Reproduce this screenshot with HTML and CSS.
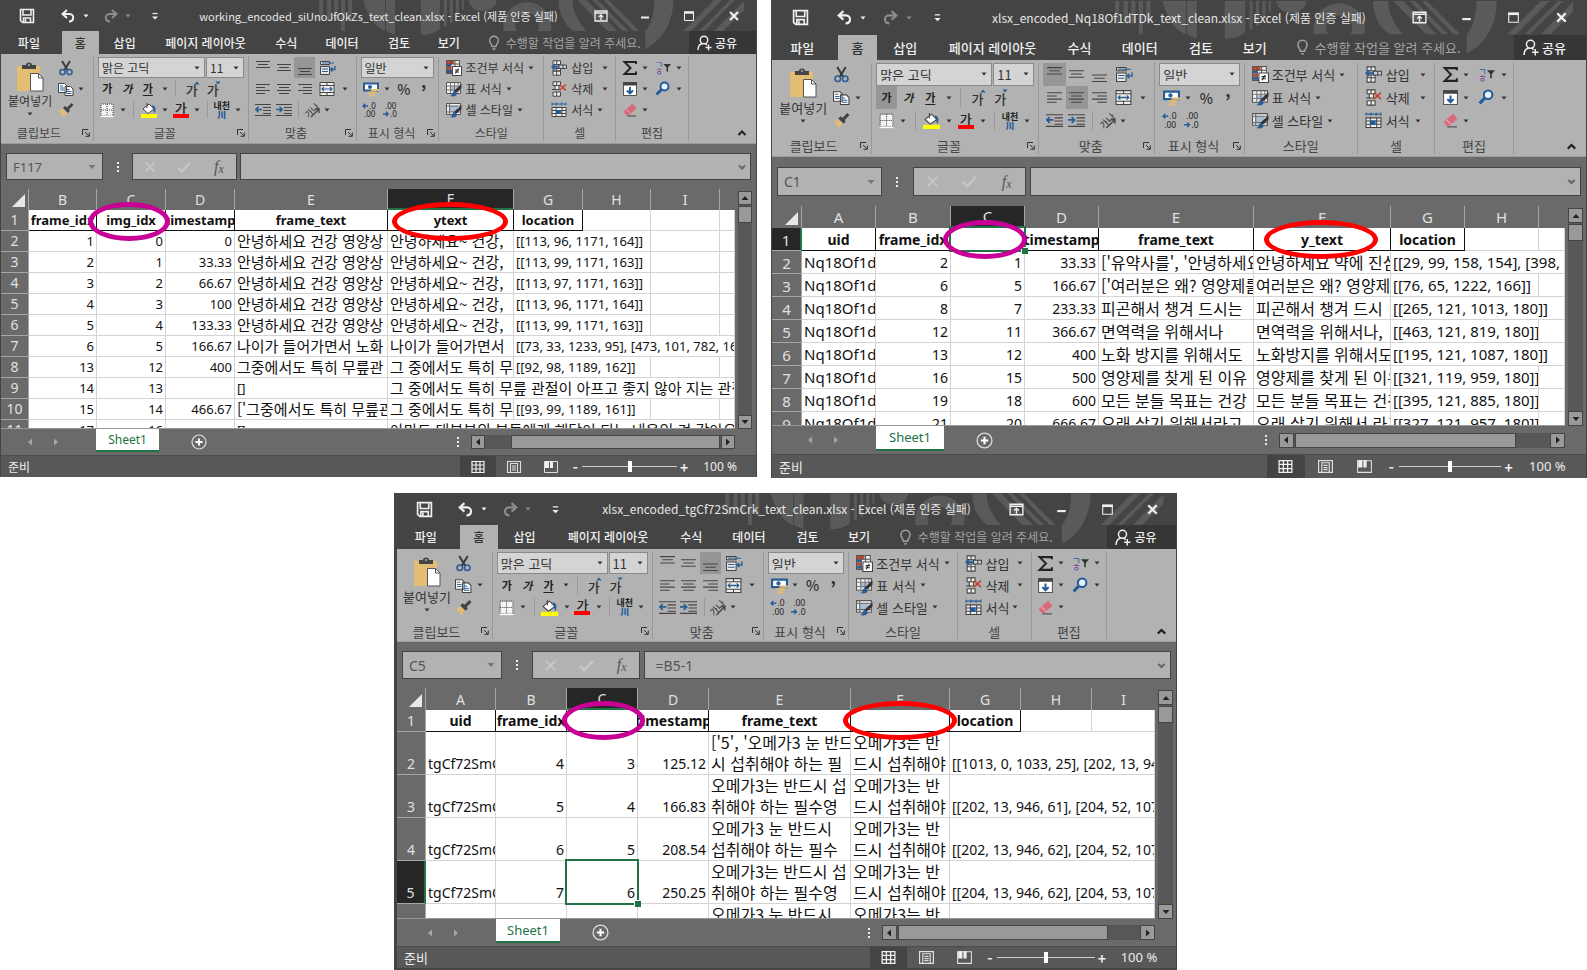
FILE: index.html
```html
<!DOCTYPE html>
<html lang="ko">
<head>
<meta charset="utf-8">
<meta name="viewport" content="width=device-width, initial-scale=1">
<title>Excel</title>
<link rel="stylesheet" href="styles.css">
</head>
<body>
<svg class="sprite" aria-hidden="true">
  <symbol id="save" viewBox="0 0 16 16"><path d="M1.5 1.5h13v13h-11l-2-2z" fill="none" stroke="#f0f0f0" stroke-width="1.6"/><path d="M4 2v5h8V2M4.500 14v-4h7v4M6.500 11v3" fill="none" stroke="#f0f0f0" stroke-width="1.500"/></symbol>
  <symbol id="undo" viewBox="0 0 16 16"><path d="M7 2 2.500 6 7 10M3 6h6.500c5 0 5 7.500-.5 7.500" fill="none" stroke="currentColor" stroke-width="2"/></symbol>
  <symbol id="redo" viewBox="0 0 16 16"><path d="M9 2l4.500 4L9 10M13 6H6.500c-5 0-5 7.500.5 7.500" fill="none" stroke="currentColor" stroke-width="2"/></symbol>
  <symbol id="custom" viewBox="0 0 16 16"><path d="M5.500 5.500h5" stroke="currentColor" stroke-width="1.200"/><path d="M5 8.500h6l-3 3z" fill="currentColor"/></symbol>
  <symbol id="opts" viewBox="0 0 16 16"><path d="M2 3h12v10H2zM2 5h12M8 12V7M5.800 9 8 6.800 10.200 9" fill="none" stroke="currentColor" stroke-width="1.300"/></symbol>
  <symbol id="min" viewBox="0 0 16 16"><path d="M4 9.500h8" stroke="currentColor" stroke-width="2"/></symbol>
  <symbol id="max" viewBox="0 0 16 16"><path d="M3.500 4h9v8.500h-9z" fill="none" stroke="currentColor"/><path d="M3 4.500h10" stroke="currentColor" stroke-width="2.400"/></symbol>
  <symbol id="close" viewBox="0 0 16 16"><path d="m4 4 8 8M12 4l-8 8" stroke="currentColor" stroke-width="2.200"/></symbol>
  <symbol id="bulb" viewBox="0 0 16 16"><path d="M6 11.500c0-2.500-2.300-3-2.300-6a4.300 4.300 0 0 1 8.600 0c0 3-2.300 3.500-2.300 6zM6.500 14h3" fill="none" stroke="currentColor" stroke-width="1.400"/></symbol>
  <symbol id="person" viewBox="0 0 16 16"><circle cx="8" cy="5" r="3.800" fill="none" stroke="currentColor" stroke-width="1.400"/><path d="M2 15c0-4 2-6 4.500-6.500M9 8.500l2 1.500M9.500 12.500h6M12.500 9.500v6" fill="none" stroke="currentColor" stroke-width="1.400"/></symbol>
  <symbol id="arrow" viewBox="0 0 8 8"><path d="M1.500 2.500h5l-2.500 3z" fill="currentColor"/></symbol>
  <symbol id="paste" viewBox="0 0 28 30"><path d="M1 4h23v25H1z" fill="#e3bd72"/><path d="M6 7V3h4a3 2.500 0 0 1 6 0h4v4z" fill="#444"/><circle cx="13" cy="3" r="1" fill="#b2b2b2"/><path d="M14.500 11.500h8l4.500 4.500v13H14.500z" fill="#fff" stroke="#555"/><path d="M22.500 11.500V16H27" fill="none" stroke="#555"/></symbol>
  <symbol id="cut" viewBox="0 0 16 16"><path d="M4 1l5.500 9M12 1 6.500 10" stroke="#3b3b3b" stroke-width="1.900"/><circle cx="4.500" cy="12" r="2.600" fill="none" stroke="#2a5d95" stroke-width="1.500"/><circle cx="11.500" cy="12" r="2.600" fill="none" stroke="#2a5d95" stroke-width="1.500"/></symbol>
  <symbol id="copy" viewBox="0 0 16 16"><path d="M.5 2.500h6l2 2v7h-8zM7 5.500h5.500l2.500 2.500v6.500H7z" fill="#fff" stroke="#444"/><path d="M2 5h3M2 7h4M2 9h4M8.500 8.500h3M8.500 10.500h5M8.500 12.500h5" stroke="#2a5d95"/></symbol>
  <symbol id="brush" viewBox="0 0 16 16"><path d="M1 9l4-2 4 4-3 4z" fill="#e3bd72"/><path d="M5 6l2-2 2 1.500L13.500 1 15.500 3 11 7.500 12 9l-2 2z" fill="#444"/></symbol>
  <symbol id="borders" viewBox="0 0 16 16"><path d="M2 2h12v12H2z" fill="#f4f4f4"/><path d="M2 2h12v12H2zM8 2v12M2 8h12" fill="none" stroke="#444" stroke-dasharray="1 1"/><path d="M1.500 14.500h13" stroke="#fff" stroke-width="1.400"/></symbol>
  <symbol id="fill" viewBox="0 0 16 16"><path d="M2 7l6-5 5 5-6 4.500z" fill="#fff" stroke="#444"/><path d="M6 1v5" stroke="#444"/><path d="M11 3c4 1 4 4 3 8-2-1-1-3-2-4z" fill="#2a5d95"/><path d="M0 12h16v4H0z" fill="#ffff00"/></symbol>
  <symbol id="vtop" viewBox="0 0 16 16"><path d="M1 1.500h14M3 4.500h10M1 7.500h14" stroke="#444"/></symbol>
  <symbol id="vmid" viewBox="0 0 16 16"><path d="M1 4.500h14M3 7.500h10M1 10.500h14" stroke="#444"/></symbol>
  <symbol id="vbot" viewBox="0 0 16 16"><path d="M1 8.500h14M3 11.500h10M1 14.500h14" stroke="#444"/></symbol>
  <symbol id="hleft" viewBox="0 0 16 16"><path d="M1 3.500h14M1 6.500h9M1 9.500h14M1 12.500h9" stroke="#444"/></symbol>
  <symbol id="hmid" viewBox="0 0 16 16"><path d="M1 3.500h14M3 6.500h10M1 9.500h14M3 12.500h10" stroke="#444"/></symbol>
  <symbol id="hright" viewBox="0 0 16 16"><path d="M1 3.500h14M6 6.500h9M1 9.500h14M6 12.500h9" stroke="#444"/></symbol>
  <symbol id="wrap" viewBox="0 0 16 16"><path d="M.5 1.500h9v3h-9zM.5 6.500h9v8h-9z" fill="#e8e8e8" stroke="#444"/><path d="M2 3h12M2 9h6M2 11.500h6" stroke="#2a5d95"/><path d="M15 6v3.500h-4M12.500 7.500l-2 2 2 2" fill="none" stroke="#2a5d95" stroke-width="1.300"/></symbol>
  <symbol id="merge" viewBox="0 0 16 16"><path d="M1 1.500h14v13H1zM1 4.500h14M1 11.500h14M8 1.500v3M8 11.500v3" fill="#eee" stroke="#444"/><path d="M3 8h10M5 6 3 8l2 2M11 6l2 2-2 2" fill="none" stroke="#2a5d95" stroke-width="1.200"/></symbol>
  <symbol id="outdent" viewBox="0 0 16 16"><path d="M0 2.500h16M8 5.500h8M8 8.500h8M8 11.500h8M0 13.500h16" stroke="#444"/><path d="M7 7.500H1M3.500 4.800.8 7.500l2.700 2.700" fill="none" stroke="#2a5d95" stroke-width="1.600"/></symbol>
  <symbol id="indent" viewBox="0 0 16 16"><path d="M0 2.500h16M8 5.500h8M8 8.500h8M8 11.500h8M0 13.500h16" stroke="#444"/><path d="M0 7.500h6M3.500 4.800l2.700 2.700-2.700 2.700" fill="none" stroke="#2a5d95" stroke-width="1.600"/></symbol>
  <symbol id="orient" viewBox="0 0 16 16"><text x="-1" y="12" font-size="9" transform="rotate(-45 7 9)" fill="#333">가나</text><path d="M6 15 14 7M14 11V7h-4" fill="none" stroke="#444" stroke-width="1.300"/></symbol>
  <symbol id="money" viewBox="0 0 16 16"><path d="M1 2.500h14v7H1z" fill="#fff" stroke="#2a5d95" stroke-width="2"/><circle cx="7" cy="6" r="2" fill="#2a5d95"/><path d="M8 8h8v2H8zM5 10.500h8v2H5zM6 13.500h6v2H6z" fill="#e3bd72"/></symbol>
  <symbol id="decup" viewBox="0 0 16 16"><path d="M6 4H1M3.200 1.800 1 4l2.200 2.200" fill="none" stroke="#2a5d95" stroke-width="1.300"/><text x="7" y="7" font-size="8" fill="#222">.0</text><text x="2" y="15" font-size="8" fill="#222">.00</text></symbol>
  <symbol id="decdown" viewBox="0 0 16 16"><text x="2" y="7" font-size="8" fill="#222">.00</text><path d="M0 12h5M3 9.800 5.200 12 3 14.200" fill="none" stroke="#2a5d95" stroke-width="1.300"/><text x="7" y="15" font-size="8" fill="#222">.0</text></symbol>
  <symbol id="cond" viewBox="0 0 16 16"><path d="M.5.5h13v13H.5z" fill="#eee" stroke="#555"/><path d="M1 1h7v3H1zM1 7h4v3H1z" fill="#c8452c"/><path d="M1 4h4v3H1zM1 10h5v3H1z" fill="#2a5d95"/><path d="M5 .5v13M9 .5v6M1 4h12" stroke="#555"/><path d="M6.500 6.500h9v9h-9z" fill="#fff" stroke="#444"/><path d="M9 10h4M9 12h4M12.500 8.500l-3 5" stroke="#222"/></symbol>
  <symbol id="tfmt" viewBox="0 0 16 16"><path d="M.5 1.500h14v11H.5z" fill="#f2f2f2" stroke="#555"/><path d="M4 5h7v5H4z" fill="#a9bdd4"/><path d="M.5 5h14M.5 9h14M4.500 1.500v11M8.500 1.500v11M12 1.500v11" stroke="#777"/><path d="M15.500 3v4L10 12 8 10z" fill="#333"/><path d="M8 10l3 2.500c0 3-4 3.500-7 2.500 3-1 2-4 4-5z" fill="#2a5d95"/></symbol>
  <symbol id="cstyle" viewBox="0 0 16 16"><path d="M.5 1.500h14v11H.5z" fill="#f2f2f2" stroke="#555"/><path d="M3 4h9v6H3z" fill="#a9bdd4"/><path d="M.5 4h14M.5 10h14M3.500 1.500v11" stroke="#666"/><path d="M15.500 3v4L10 12 8 10z" fill="#333"/><path d="M8 10l3 2.500c0 3-4 3.500-7 2.500 3-1 2-4 4-5z" fill="#2a5d95"/></symbol>
  <symbol id="ins" viewBox="0 0 16 16"><path d="M2 .8h7.500v3.700H2zM5.700.8v3.700M2 11h7.500v4.200H2zM5.700 8.500v6.700M2 8.500h7.500V11H2z" fill="#eee" stroke="#444"/><path d="M8 5h7.500v3.500H8zM12 5v3.500" fill="#c5d2e2" stroke="#444"/><path d="M8 6.700H1.500M4 4 1.200 6.700 4 9.500" fill="none" stroke="#2a5d95" stroke-width="1.700"/></symbol>
  <symbol id="del" viewBox="0 0 16 16"><path d="M2 .8h7.500v3.700H2zM5.700.8v3.700M2 11h7.500v4.200H2zM5.700 11v4.200M4 4.500h4v4H4z" fill="#eee" stroke="#444"/><path d="M1 8.500h4" stroke="#444"/><path d="m8.500 3.500 6.500 6M15 3.500l-6.500 6" stroke="#c8452c" stroke-width="1.600"/></symbol>
  <symbol id="fmt" viewBox="0 0 16 16"><path d="M1 2h14M1 .5v3M15 .5v3M5.500.5v3M10.500.5v3" stroke="#2a5d95"/><path d="M1 5.500h14v9H1zM1 8.500h14M1 11.500h14M5 5.500v9M11 5.500v9" fill="#eee" stroke="#444"/><path d="M5 8h5v4H5z" fill="#1f5a9c"/></symbol>
  <symbol id="sum" viewBox="0 0 16 16"><path d="M14 4V2H2.500l6 6-6 6H14v-2.500" fill="none" stroke="#222" stroke-width="1.900"/></symbol>
  <symbol id="filldown" viewBox="0 0 16 16"><path d="M1.500 2.500h13v12h-13z" fill="#fff" stroke="#555"/><path d="M1 1h14v3.500H1z" fill="#444"/><path d="M8 6v6.500M5 9.500l3 3 3-3" fill="none" stroke="#1f5a9c" stroke-width="1.900"/></symbol>
  <symbol id="sort" viewBox="0 0 16 16"><text x="0" y="8" font-size="9" fill="#1f5a9c">ㄱ</text><text x="0" y="15" font-size="9" fill="#7c3c9c">ㅎ</text><path d="M8.500 4H16l-3 3.500V12l-1.500-1V7.500z" fill="#333"/></symbol>
  <symbol id="find" viewBox="0 0 16 16"><circle cx="9.500" cy="5.500" r="4" fill="#e9eff6" stroke="#1f5a9c" stroke-width="1.900"/><path d="M6.500 8.500 1.500 13.500" stroke="#1f5a9c" stroke-width="2.800"/></symbol>
  <symbol id="erase" viewBox="0 0 16 16"><path d="M10.500 1.500 14.500 6.500 7 13H4L1.500 9.500z" fill="#d9697d"/><path d="m4 7.300 4.500 4" stroke="#e9a5b0"/><path d="M5 14h9" stroke="#444"/></symbol>
  <symbol id="launch" viewBox="0 0 8 8"><path d="M.5 6V.5H6M3 3l4 4M7.300 3.500v3.800H3.500" fill="none" stroke="#333"/></symbol>
  <symbol id="chevup" viewBox="0 0 16 16"><path d="m4.500 10 3.500-3.500 3.500 3.500" fill="none" stroke="#222" stroke-width="2"/></symbol>
  <symbol id="chevdown" viewBox="0 0 16 16"><path d="m5 6.500 3 3 3-3" fill="none" stroke="#666" stroke-width="2"/></symbol>
  <symbol id="cancel" viewBox="0 0 16 16"><path d="m3.500 3.500 9 9M12.500 3.500l-9 9" stroke="#c6c6c6" stroke-width="1.900"/></symbol>
  <symbol id="enter" viewBox="0 0 16 16"><path d="m2 8.500 4 4 8-9" fill="none" stroke="#c6c6c6" stroke-width="2.400"/></symbol>
  <symbol id="dots" viewBox="0 0 4 12"><path d="M1 1h2v2H1zM1 5h2v2H1zM1 9h2v2H1z" fill="#eee"/></symbol>
  <symbol id="tri-l" viewBox="0 0 8 8"><path d="M6 .5v7L2 4z" fill="currentColor"/></symbol>
  <symbol id="tri-r" viewBox="0 0 8 8"><path d="M2 .5v7L6 4z" fill="currentColor"/></symbol>
  <symbol id="tri-u" viewBox="0 0 8 8"><path d="M.5 6h7L4 2z" fill="currentColor"/></symbol>
  <symbol id="tri-d" viewBox="0 0 8 8"><path d="M.5 2h7L4 6z" fill="currentColor"/></symbol>
  <symbol id="plus" viewBox="0 0 16 16"><circle cx="8" cy="8" r="7" fill="none" stroke="#ddd" stroke-width="1.200"/><path d="M8 4.500v7M4.500 8h7" stroke="#fff" stroke-width="2"/></symbol>
  <symbol id="v-grid" viewBox="0 0 16 16"><path d="M2 2.500h12v11H2zM2 6h12M2 10h12M6 2.500v11M10 2.500v11" fill="none" stroke="#f0f0f0" stroke-width="1.200"/></symbol>
  <symbol id="v-page" viewBox="0 0 16 16"><path d="M1.500 2.500h13v11h-13zM4.500 4.500h7v9h-7zM6 7h4M6 9h4M6 11h4" fill="none" stroke="#e0e0e0" stroke-width="1.100"/></symbol>
  <symbol id="v-break" viewBox="0 0 16 16"><path d="M1.500 2.500h13v11h-13z" fill="none" stroke="#e0e0e0"/><path d="M2 2h4v7H2zM7 2h3v7H7z" fill="#eee"/></symbol>
  <symbol id="deco" viewBox="0 0 757 54">
    <g fill="#5a5a5a">
      <path d="M319 0h4v21h-4zM327 0h4v21h-4zM334 0h4v21h-4zM341 0h4v31h-4zM348 0h4v21h-4zM363 0h22v31c-10-3-18-17-22-31zM386 0h9v35l-9-4zM421 0h19v29c-6 5-12 6-19 6zM444 0h3v26h-3zM450 0h3v23h-3zM456 0h3v16h-3zM462 0h2v10h-2z"/>
      <path d="M469 0h28c-2 15-26 15-28 0z"/>
      <path fill-rule="evenodd" d="M504 31a24 24 0 1 1 47 0h-13a12 12 0 1 0-21 0z"/>
      <path d="M559 0h14c0 12 6 22 14 31h-13C565 25 559 13 559 0zM578 0h9l31 31h-10zM593 0h5l31 31h-6zM604 0h5l31 31h-6zM655 0h19c0 24-12 41-28 49V31c6-6 9-18 9-31zM684 31l31-31h8l-31 31zM700 31l31-31h5l-31 31zM715 31l30-30v9l-21 21z"/>
    </g>
  </symbol>
</svg>
<main class="desk">
  <div class="top" id="top"></div>
  <div class="bottom" id="bottom"></div>
</main>
<script src="app.js"></script>
</body>
</html>
```
FILE: styles.css
```css
* { box-sizing: border-box; }
body { margin: 0; background: #fff; font-family: "Noto Sans CJK KR", sans-serif; }
button, input, select { font: inherit; color: inherit; border: 0; padding: 0; margin: 0; background: none; border-radius: 0; }
.sprite { position: absolute; width: 0; height: 0; }
.sprite text, .ic text { font-family: "Noto Sans", "Noto Sans CJK KR", sans-serif; }

.desk { display: flex; flex-direction: column; gap: 15px; }
.top { display: grid; grid-template-columns: 757fr 816fr; column-gap: 14px; align-items: start; }
.bottom { display: grid; grid-template-columns: 394fr 783fr 410fr; }
.bottom .win { grid-column: 2; }

.win {
  --ui: 12px; --tab: 12px; --title: 11px; --icon: 16px;
  --caption: 31px; --tabs: 23px; --ribbon: 90px; --row: 21px;
  --box: 27px; --gap: 9px; --colh: 21px; --view: 240px; --cellh: 21px;
  --num: 13px; --txt: 13px; --ko: 15px; --head: 14px; --line: 20px;
  --sheetbar: 26px; --status: 22px; --bar: 14px; --nav: 95px; --sheet: 63px;
  min-width: 0; background: #6a6a6a; border: solid #444; border-width: 0 1px;
  font-size: var(--ui); line-height: 1;
}
.win.large {
  --ui: 13px; --tab: 13px; --title: 12px; --icon: 17px;
  --caption: 35px; --tabs: 25px; --ribbon: 97px; --row: 23px;
  --box: 29px; --gap: 10px; --colh: 22px; --view: 220px; --cellh: 23px;
  --num: 14px; --txt: 15px; --ko: 16px; --head: 15px; --line: 21px;
  --sheetbar: 28px; --status: 24px; --bar: 15px; --nav: 104px; --sheet: 68px;
}
.win.medium {
  --ui: 13px; --tab: 12px; --title: 12px; --icon: 17px;
  --caption: 32px; --tabs: 24px; --ribbon: 93px; --row: 22px;
  --box: 28px; --colh: 22px; --view: 231px; --cellh: 43px;
  --num: 14px; --txt: 14px; --ko: 16px; --head: 14px; --line: 21px;
  --sheetbar: 27px; --bar: 15px; --nav: 99px; --sheet: 64px;
  border-width: 0 1px 2px 3px;
}

.ic { display: block; flex: none; width: var(--icon); height: var(--icon); overflow: visible; }
.ar { width: 8px; height: 8px; }
.btn { display: flex; align-items: center; justify-content: center; min-width: 0; height: 100%; white-space: nowrap; }

/* caption and tabs */
.chrome { position: relative; background: #444; color: #f0f0f0; }
.deco { position: absolute; left: 0; top: 0; width: 100%; height: 100%; }
.caption { position: relative; display: grid; height: var(--caption); align-items: center;
  grid-template-columns: 53fr 28fr 8fr 8fr 26fr 8fr 46fr 403fr 44fr 44fr 44fr 45fr; }
.caption .dim { color: #8c8c8c; }
.caption h1 { margin: 0; min-width: 0; font-size: var(--title); font-weight: 400; line-height: 20px; text-align: center; white-space: nowrap; color: #e6e6e6; }
.tabs { position: relative; display: grid; height: var(--tabs); font-size: var(--tab); font-weight: 500;
  grid-template-columns: 61fr 37fr 52fr 110fr 52fr 60fr 54fr 46fr 218fr 67fr; }
.tabs .btn:first-child { padding-right: 5px; }
.tabs .on { background: #b2b2b2; color: #333; }
.tabs .tell { justify-content: flex-start; padding-left: 14px; gap: 4px; color: #a3a3a3; font-weight: 400; }
.tabs .share { background: #363636; gap: 3px; padding-right: 12px; }

/* ribbon */
.ribbon { display: grid; height: var(--ribbon); padding: 3px 0 2px; background: #b2b2b2; border-bottom: 1px solid #9c9c9c; color: #333;
  grid-template-columns: 93fr 155fr 108fr 83fr 105fr 72fr 73fr 67fr; }
.group { position: relative; min-width: 0; display: grid; grid-template-rows: repeat(3, var(--row)) 1fr; border-right: 1px solid #999; }
.group:last-child { border: 0; }
.row { display: grid; align-items: center; min-width: 0; }
.label { display: flex; align-items: center; justify-content: center; padding-top: 5px; white-space: nowrap; color: #444; }
.label.more { padding-right: 12px; }
.label .launch { position: absolute; right: 3px; bottom: 4px; width: 8px; height: 8px; }
.launch .ic { width: 8px; height: 8px; }
.clip { grid-template-columns: 54fr 23fr 8fr 8fr; }
.clip .paste { grid-row: 1 / 4; flex-direction: column; justify-content: flex-start; gap: 3px; padding-top: 5px; padding-left: 5px; }
.paste .ic { width: 28px; height: 30px; }
.paste .ar { width: 8px; height: 8px; }
.clip .label { grid-column: 1 / -1; padding-right: 16px; }
.f1 { grid-template-columns: 108fr 38fr; padding: 0 4px; column-gap: 1px; }
.f2 { grid-template-columns: 4fr 19fr 21fr 20fr 14fr 8fr 22fr 20fr 26fr; }
.f3 { grid-template-columns: 4fr 18fr 14fr 8fr 22fr 11fr 20fr 12fr 9fr 20fr 12fr 4fr; }
.a1 { grid-template-columns: 4fr 21fr 21fr 21fr 27fr 14fr; }
.a2 { grid-template-columns: 4fr 21fr 21fr 21fr 25fr 10fr 6fr; }
.a3 { grid-template-columns: 4fr 21fr 21fr 9fr 20fr 8fr 25fr; }
.n1 { padding: 0 4px; }
.n2 { grid-template-columns: 4fr 22fr 9fr 26fr 14fr 8fr; }
.n3 { grid-template-columns: 4fr 20fr 22fr 37fr; }
.s1 { padding-left: 7px; }
.s1 .btn { justify-content: flex-start; gap: 3px; }
.c1 { grid-template-columns: 49fr 22fr; padding-left: 5px; }
.c1 .btn:first-child { gap: 4px; justify-content: flex-start; padding-left: 2px; }
.c1.tight { grid-template-columns: 49fr 12fr 10fr; }
.e1 { grid-template-columns: 4fr 20fr 10fr 28fr 4fr; padding-right: 7px; }
.sep { width: 1px; height: 80%; justify-self: center; background: #999; }
.pressed { background: #969696; }
.combo { position: relative; display: block; height: var(--row); }
.combo select { appearance: none; width: 100%; height: 100%; padding-left: 3px; background: #d4d4d4; border: 1px solid #8a8a8a; color: #333; }
.combo .ar { position: absolute; right: 4px; top: 7px; pointer-events: none; }
.ga { font-size: 11px; font-weight: 700; color: #222; }
.ga.i { font-style: italic; }
.ga.u { text-decoration: underline; text-underline-offset: 2px; }
.ga.big { font-size: 13px; font-weight: 500; color: #333; padding-top: 2px; padding-left: 4px; }
.ga.big .ar { color: #2a5d95; align-self: flex-start; margin-left: -4px; width: 6px; height: 6px; }
.ga.col { position: relative; font-size: 13px; font-weight: 500; flex-direction: column; padding-bottom: 1px; }
.ga.col::after { content: ""; width: 16px; height: 4px; flex: none; background: #f00; }
.phon { flex-direction: column; font-size: 9px; line-height: 9px; font-weight: 700; color: #222; }
.phon b { color: #1f5a9c; font-size: 9px; }
.pct { font-size: 14px; font-weight: 500; }
.comma { font-size: 16px; font-weight: 900; padding-top: 4px; }
.fold { position: absolute; right: 6px; bottom: 0; height: 16px; }

/* formula bar */
.formula { display: grid; padding: var(--gap) 5px; grid-template-columns: 97fr 29fr 105fr 3fr 511fr; }
.formula > * { height: var(--box); min-width: 0; }
.field { display: flex; align-items: center; background: #b2b2b2; border: 1px solid #444; color: #555; padding-right: 4px; }
.field.wide { padding-right: 0; }
.field input { flex: 1; min-width: 0; padding-left: 6px; height: 100%; font-family: "Noto Sans", sans-serif; font-size: var(--num); }
.field.wide input { padding-left: 11px; }
.field .ar { margin-right: 2px; color: #777; }
.tools { display: grid; grid-template-columns: repeat(3, 1fr); background: #b2b2b2; border: 1px solid #444; }
.fxi { font-family: "Liberation Serif", serif; font-style: italic; font-size: 16px; color: #555; }
.fxi small { font-size: 12px; padding-top: 4px; }
.dots { width: 4px; height: 12px; }

/* sheet */
.sheet { position: relative; display: grid; grid-template-columns: minmax(0, 1fr) 21px; height: var(--view); }
.clipbox { overflow: hidden; border-bottom: 1px solid #999; }
.cells { width: 100%; table-layout: fixed; border-collapse: separate; border-spacing: 0; font-family: "Noto Sans", "Noto Sans CJK KR", sans-serif; font-size: var(--num); color: #111; }
.cells th, .cells td { padding: 0; position: relative; }
.cells thead th { height: var(--colh); background: #6a6a6a; border-right: 1px solid #a6a6a6; color: #e0e0e0; font-weight: 400; font-size: var(--head); line-height: 19px; }
.cells thead th.sel { background: #262626; border-bottom: 2px solid #217346; }
.cells thead th:last-child { border-right: 0; }
.corner svg { position: absolute; right: 3px; bottom: 3px; width: 13px; height: 13px; }
.cells tbody th { height: var(--cellh); background: #6a6a6a; border-bottom: 1px solid #a6a6a6; border-right: 1px solid #a6a6a6; color: #e0e0e0; font-weight: 400; font-size: var(--head); vertical-align: bottom; line-height: 20px; }
.cells tbody th.sel { background: #262626; border-right: 2px solid #217346; }
.cells td { background: #fff; border-right: 1px solid #d4d4d4; border-bottom: 1px solid #d4d4d4; vertical-align: bottom; }
.cells td > div { overflow: hidden; white-space: nowrap; padding: 0 2px; line-height: var(--line); height: calc(var(--cellh) - 1px); display: flex; align-items: flex-end; }
.cells .n > div { justify-content: flex-end; }
.cells .t { font-size: var(--txt); }
.cells .k { font-family: "Noto Sans CJK KR", sans-serif; font-size: var(--ko); }
.medium .cells tbody tr:first-child th { height: 22px; }
.medium .cells tbody tr:first-child td > div { height: 21px; }
.cells .h { font-size: var(--num); font-weight: 700; border-color: #111; }
.cells .h > div { justify-content: center; }
.cursor { position: absolute; inset: -2px; border: 2px solid #217346; z-index: 1; }
.cursor::after { content: ""; position: absolute; right: -4px; bottom: -4px; width: 6px; height: 6px; background: #217346; border: solid #fff; border-width: 1px 0 0 1px; }
.mark { position: absolute; z-index: 2; border: 5px solid #c80096; border-radius: 50%; height: 39px; top: 13px; }
.mark.red { border-color: #f00; }
.small .mark { left: 87px; width: 82px; }
.small .mark.red { left: 391px; width: 116px; }
.large .mark { left: 171px; width: 84px; top: 14px; }
.large .mark.red { left: 492px; width: 114px; }
.medium .mark { left: 165px; width: 83px; }
.medium .mark.red { left: 446px; width: 114px; }

.vbar { display: flex; flex-direction: column; width: var(--bar); margin: 2px 0 0 3px; background: #585858; }
.vbar .btn, .hbar .btn { flex: none; width: var(--bar); height: var(--bar); background: #999; border: 1px solid #444; color: #222; }
.vbar .thumb { height: 17px; margin: 1px 0 auto; background: #999; border: 1px solid #444; }
.sheetbar { display: grid; height: var(--sheetbar); grid-template-columns: var(--nav) var(--sheet) minmax(0, 1fr) 37% 21px; align-items: center; }
.nav { display: flex; justify-content: flex-end; gap: 18px; padding-right: 36px; color: #a6a6a6; }
.sheettab { align-self: start; height: calc(var(--sheetbar) - 3px); background: #fff; border-bottom: 2px solid #217346; color: #217346; font-size: var(--ui); font-family: "Noto Sans", sans-serif; }
.add { width: 16px; margin-left: 32px; }
.scroll { display: grid; grid-template-columns: 15px minmax(0, 1fr); align-items: center; }
.hbar { display: grid; height: var(--bar); background: #585858; grid-template-columns: auto minmax(0, 1fr) auto; }
.hbar .track { display: flex; padding: 0 1px; }
.hbar .thumb { background: #999; border: 1px solid #444; width: 89%; margin-left: auto; }
.medium .hbar .thumb, .large .hbar .thumb { width: 87%; margin-left: 0; }
.statusbar { display: grid; height: var(--status); align-items: center; background: #585858; border-top: 1px solid #4c4c4c; color: #eee;
  grid-template-columns: 460fr 36fr 37fr 36fr 14fr 95fr 14fr 58fr 7fr; }
.statusbar .state { padding-left: 7px; }
.statusbar .on { background: #444; }
.statusbar .pctv { text-align: center; white-space: nowrap; font-family: "Noto Sans", sans-serif; }
.statusbar .sign { font-size: 14px; font-weight: 700; }
.slider { appearance: none; width: 100%; height: 14px; background: linear-gradient(#d0d0d0, #d0d0d0) center / 100% 1px no-repeat; }
.slider::-webkit-slider-thumb { appearance: none; width: 4px; height: 11px; background: #fff; }
```
FILE: app.js
```javascript
const ic = (id, cls = '') => `<svg class="ic ${cls}" aria-hidden="true"><use href="#${id}"/></svg>`;
const btn = (label, body, cls = '') => `<button type="button" class="btn ${cls}" aria-label="${label}">${body}</button>`;
const ib = (id, label, cls) => btn(label, ic(id), cls);
const ar = label => btn(label + ' 옵션', ic('arrow', 'ar'));
const sep = '<i class="sep"></i>';
const gap = '<i></i>';
const row = (cls, ...items) => `<div class="row ${cls}">${items.join('')}</div>`;
const combo = (label, value) => `<label class="combo"><select aria-label="${label}"><option>${value}</option></select>${ic('arrow', 'ar')}</label>`;
const label = (text, launch) => `<div class="label ${launch ? 'more' : ''}">${text}${launch ? btn(text + ' 설정', ic('launch'), 'launch') : ''}</div>`;

const caption = title => `<div class="caption">
  ${ib('save', '저장')}${ib('undo', '실행 취소')}${ar('실행 취소')}${gap}
  ${ib('redo', '다시 실행', 'dim')}${btn('다시 실행 옵션', ic('arrow', 'ar'), 'dim')}${ib('custom', '빠른 실행 사용자 지정')}
  <h1>${title} - Excel (제품 인증 실패)</h1>
  ${ib('opts', '리본 표시 옵션')}${ib('min', '최소화')}${ib('max', '최대화')}${ib('close', '닫기')}</div>`;

const tabs = () => {
  const names = ['파일', '홈', '삽입', '페이지 레이아웃', '수식', '데이터', '검토', '보기'];
  return `<nav class="tabs">${names.map(n => btn(n, n, n === '홈' ? 'on' : '')).join('')}
  ${btn('수행할 작업', ic('bulb') + '수행할 작업을 알려 주세요.', 'tell')}${btn('공유', ic('person') + '공유', 'share')}</nav>`;
};

const ribbon = w => {
  const on = name => (w.pressed.includes(name) ? 'pressed' : '');
  return `<div class="ribbon">
  <div class="group clip">${btn('붙여넣기', ic('paste') + '<span>붙여넣기</span>' + ic('arrow', 'ar'), 'paste')}
    ${ib('cut', '잘라내기')}${gap}${gap}${ib('copy', '복사')}${ar('복사')}${gap}${ib('brush', '서식 복사')}${gap}${gap}${label('클립보드', 1)}</div>
  <div class="group">
    ${row('f1', combo('글꼴', '맑은 고딕'), combo('글꼴 크기', '11'))}
    ${row('f2', gap, btn('굵게', '가', 'ga ' + on('bold')), btn('기울임꼴', '가', 'ga i'), btn('밑줄', '가', 'ga u'), ar('밑줄'), sep,
      btn('글꼴 크기 크게', '가' + ic('tri-u', 'ar'), 'ga big'), btn('글꼴 크기 작게', '가' + ic('tri-d', 'ar'), 'ga big'))}
    ${row('f3', gap, ib('borders', '테두리'), ar('테두리'), sep, ib('fill', '채우기 색'), ar('채우기 색'), btn('글꼴 색', '가', 'ga col'), ar('글꼴 색'), sep,
      btn('윗주', '<span>내천</span><b>川</b>', 'phon'), ar('윗주'))}
    ${label('글꼴', 1)}</div>
  <div class="group">
    ${row('a1', gap, ib('vtop', '위쪽 맞춤', on('vtop')), ib('vmid', '가운데 맞춤'), ib('vbot', '아래쪽 맞춤', on('vbot')), ib('wrap', '텍스트 줄 바꿈'))}
    ${row('a2', gap, ib('hleft', '왼쪽 맞춤'), ib('hmid', '가로 가운데', on('hmid')), ib('hright', '오른쪽 맞춤'), ib('merge', '병합'), ar('병합'))}
    ${row('a3', gap, ib('outdent', '내어쓰기'), ib('indent', '들여쓰기'), sep, ib('orient', '방향'), ar('방향'))}
    ${label('맞춤', 1)}</div>
  <div class="group">
    ${row('n1', combo('표시 형식', '일반'))}
    ${row('n2', gap, ib('money', '회계 형식'), ar('회계 형식'), btn('백분율', '%', 'pct'), btn('쉼표', '’', 'comma'))}
    ${row('n3', gap, ib('decup', '자릿수 늘림'), ib('decdown', '자릿수 줄임'))}
    ${label('표시 형식', 1)}</div>
  <div class="group">
    ${[['cond', '조건부 서식'], ['tfmt', '표 서식'], ['cstyle', '셀 스타일']].map(([i, t]) => row('s1', btn(t, ic(i) + t + ic('arrow', 'ar')))).join('')}
    ${label('스타일')}</div>
  <div class="group">
    ${row('c1', btn('삽입', ic('ins') + '삽입'), ar('삽입'))}${row('c1', btn('삭제', ic('del') + '삭제'), ar('삭제'))}
    ${row('c1 tight', btn('서식', ic('fmt') + '서식'), ar('서식'))}${label('셀')}</div>
  <div class="group">
    ${row('e1', gap, ib('sum', '자동 합계'), ar('자동 합계'), ib('sort', '정렬 및 필터'), ar('정렬'))}
    ${row('e1', gap, ib('filldown', '채우기'), ar('채우기'), ib('find', '찾기'), ar('찾기'))}
    ${row('e1', gap, ib('erase', '지우기'), ar('지우기'))}${label('편집')}</div>
  <div class="group">${ib('chevup', '리본 축소', 'fold')}</div></div>`;
};

const formula = w => `<div class="formula">
  <div class="field"><input aria-label="이름 상자" value="${w.ref}">${ic('tri-d', 'ar')}</div>
  <span class="btn">${ic('dots', 'dots')}</span>
  <div class="tools">${ib('cancel', '취소')}${ib('enter', '입력')}${btn('함수 삽입', 'f<small>x</small>', 'fxi')}</div>
  <i></i>
  <div class="field wide"><input aria-label="수식" value="${w.formula}">${ic('chevdown')}</div></div>`;

const kind = v => (typeof v === 'number' ? 'n' : /[가-힣]/.test(v) ? 'k' : 't');

const cell = (value, r, c, w) => {
  const { text, span } = value && value.span ? value : { text: value, span: 1 };
  const cls = r === 1 && c < w.headed ? 'h' : kind(text);
  const cursor = w.cursor && w.cursor[0] === r && w.cursor[1] === c ? '<span class="cursor"></span>' : '';
  return `<td class="${cls}" colspan="${span}"><div><span>${text}</span></div>${cursor}</td>`;
};

const sheet = w => `<div class="sheet"><div class="clipbox"><table class="cells">
  <colgroup>${w.widths.map(x => `<col style="width:${x}px">`).join('')}<col></colgroup>
  <thead><tr><th class="corner"><svg viewBox="0 0 13 13"><path d="M13 0v13H0z" fill="#e8e8e8"/></svg></th>
  ${w.cols.map(c => `<th class="${c === w.selCol ? 'sel' : ''}">${c}</th>`).join('')}</tr></thead>
  <tbody>${w.rows.map((cells, i) => `<tr><th class="${i + 1 === w.selRow ? 'sel' : ''}">${w.rowName(i + 1)}</th>${cells.map((v, c) => cell(v, i + 1, c, w)).join('')}</tr>`).join('')}</tbody>
  </table></div>
  <div class="vbar">${btn('위로', ic('tri-u', 'ar'))}<span class="thumb"></span>${btn('아래로', ic('tri-d', 'ar'))}</div>
  <span class="mark"></span><span class="mark red"></span></div>`;

const footer = () => `<div class="sheetbar">
  <div class="nav">${ic('tri-l', 'ar')}${ic('tri-r', 'ar')}</div>
  <button type="button" class="sheettab">Sheet1</button>${ib('plus', '새 시트', 'add')}
  <div class="scroll">${ic('dots', 'dots')}<div class="hbar">${btn('왼쪽', ic('tri-l', 'ar'))}<div class="track"><span class="thumb"></span></div>${btn('오른쪽', ic('tri-r', 'ar'))}</div></div>
  </div>
  <div class="statusbar"><span class="state">준비</span>${ib('v-grid', '기본', 'on')}${ib('v-page', '페이지 레이아웃 보기')}${ib('v-break', '페이지 나누기')}
  ${btn('축소', '-', 'sign')}<input class="slider" type="range" aria-label="확대/축소" value="50">${btn('확대', '+', 'sign')}<span class="pctv">100 %</span></div>`;

const render = w => `<section class="win ${w.size}"><div class="chrome"><svg class="deco" aria-hidden="true"><use href="#deco"/></svg>
  ${caption(w.title)}${tabs()}</div>${ribbon(w)}${formula(w)}${sheet(w)}${footer()}</section>`;

const s = (text, span) => ({ text, span });
const hi = '안녕하세요 건강 영양상';
const hiY = '안녕하세요~ 건강,';
const u2 = 'Nq18Of1dTDk';
const u3 = 'tgCf72SmCrk';
const omegaA = '오메가3는 반드시 섭<br>취해야 하는 필수영';
const omegaB = '오메가3 눈 반드시<br>섭취해야 하는 필수';
const omegaY = '오메가3는 반<br>드시 섭취해야';

const first = {
  size: 'small', title: 'working_encoded_siUnoJfOkZs_text_clean.xlsx', ref: 'F117', formula: '', pressed: ['vbot'],
  widths: [28, 68, 69, 69, 153, 126, 69, 68, 69], cols: ['B', 'C', 'D', 'E', 'F', 'G', 'H', 'I', ''],
  selCol: 'F', headed: 6, rowName: n => n,
  rows: [
    ['frame_idx', 'img_idx', 'timestamp', 'frame_text', 'ytext', 'location', '', '', ''],
    [1, 0, 0, hi, hiY, s('[[113, 96, 1171, 164]]', 2), '', ''],
    [2, 1, 33.33, hi, hiY, s('[[113, 99, 1171, 163]]', 2), '', ''],
    [3, 2, 66.67, hi, hiY, s('[[113, 97, 1171, 163]]', 2), '', ''],
    [4, 3, 100, hi, hiY, s('[[113, 96, 1171, 164]]', 2), '', ''],
    [5, 4, 133.33, hi, hiY, s('[[113, 99, 1171, 163]]', 2), '', ''],
    [6, 5, 166.67, '나이가 들어가면서 노화', '나이가 들어가면서', s('[[73, 33, 1233, 95], [473, 101, 782, 160]]', 4)],
    [13, 12, 400, '그중에서도 특히 무릎관', '그 중에서도 특히 무릎', s('[[92, 98, 1189, 162]]', 2), '', ''],
    [14, 13, '', '[]', s('그 중에서도 특히 무릎 관절이 아프고 좋지 않아 지는 관절', 5)],
    [15, 14, 466.67, "['그중에서도 특히 무릎관", '그 중에서도 특히 무릎', s('[[93, 99, 1189, 161]]', 2), '', ''],
    [17, 16, '', '[]', s('아마도 대부분의 분들에게 해당이 되는 내용인 것 같아요', 5)],
  ],
};

const second = {
  size: 'large', title: 'xlsx_encoded_Nq18Of1dTDk_text_clean.xlsx', ref: 'C1', formula: '', pressed: ['bold', 'vtop', 'hmid'],
  widths: [30, 74, 75, 74, 74, 155, 137, 74, 74], cols: ['A', 'B', 'C', 'D', 'E', 'F', 'G', 'H', ''],
  selCol: 'C', selRow: 1, cursor: [1, 2], headed: 7, rowName: n => n,
  rows: [
    ['uid', 'frame_idx', '', 'timestamp', 'frame_text', 'y_text', 'location', '', ''],
    [u2, 2, 1, 33.33, "['유약사를', '안녕하세요", '안녕하세요 약에 진심', s('[[29, 99, 158, 154], [398, 100, 500, 154]]', 3)],
    [u2, 6, 5, 166.67, "['여러분은 왜? 영양제를", '여러분은 왜? 영양제', s('[[76, 65, 1222, 166]]', 2), ''],
    [u2, 8, 7, 233.33, '피곤해서 챙겨 드시는', '피곤해서 챙겨 드시', s('[[265, 121, 1013, 180]]', 3)],
    [u2, 12, 11, 366.67, '면역력을 위해서나', '면역력을 위해서나,', s('[[463, 121, 819, 180]]', 2), ''],
    [u2, 13, 12, 400, '노화 방지를 위해서도', '노화방지를 위해서도', s('[[195, 121, 1087, 180]]', 3)],
    [u2, 16, 15, 500, '영양제를 찾게 된 이유', '영양제를 찾게 된 이유', s('[[321, 119, 959, 180]]', 2), ''],
    [u2, 19, 18, 600, '모든 분들 목표는 건강', '모든 분들 목표는 건강', s('[[395, 121, 885, 180]]', 2), ''],
    [u2, 21, 20, 666.67, '오래 살기 위해서라고', '오래 살기 위해서 라고', s('[[327, 121, 957, 180]]', 2), ''],
  ],
};

const third = {
  size: 'medium', title: 'xlsx_encoded_tgCf72SmCrk_text_clean.xlsx', ref: 'C5', formula: '=B5-1', pressed: ['vbot'],
  widths: [29, 70, 71, 71, 71, 142, 99, 71, 71], cols: ['A', 'B', 'C', 'D', 'E', 'F', 'G', 'H', 'I'],
  selCol: 'C', selRow: 5, cursor: [5, 2], headed: 7, rowName: n => (n < 6 ? n : ''),
  rows: [
    ['uid', 'frame_idx', '', 'timestamp', 'frame_text', '', 'location', '', ''],
    [u3, 4, 3, 125.12, "['5', '오메가3 눈 반드<br>시 섭취해야 하는 필", omegaY, s('[[1013, 0, 1033, 25], [202, 13, 946, 61]]', 3)],
    [u3, 5, 4, 166.83, omegaA, omegaY, s('[[202, 13, 946, 61], [204, 52, 1070, 98]]', 3)],
    [u3, 6, 5, 208.54, omegaB, omegaY, s('[[202, 13, 946, 62], [204, 52, 1070, 98]]', 3)],
    [u3, 7, 6, 250.25, omegaA, omegaY, s('[[204, 13, 946, 62], [204, 53, 1070, 98]]', 3)],
    ['', '', '', '', omegaB, omegaY, s('', 3)],
  ],
};

document.getElementById('top').innerHTML = render(first) + render(second);
document.getElementById('bottom').innerHTML = render(third);
```
